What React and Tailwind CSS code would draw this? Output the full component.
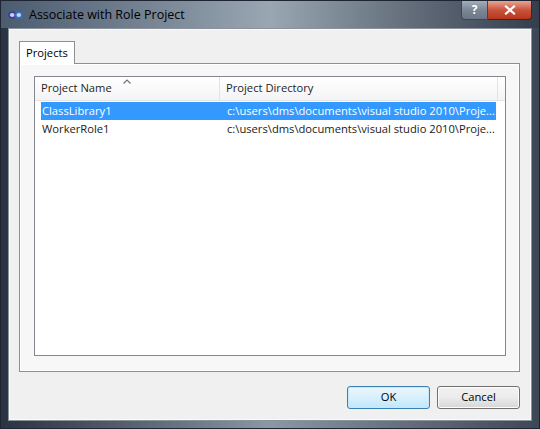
import React from "react";

const ui = { fontFamily: '"Open Sans", "Noto Sans", "DejaVu Sans", sans-serif' };

function TitleIcon() {
  return (
    <svg width="15" height="8" viewBox="0 0 15 8" className="shrink-0">
      <ellipse cx="4.2" cy="4" rx="3.2" ry="2.8" fill="#c9d3ea" stroke="#3d3f9a" strokeWidth="1.8" />
      <ellipse cx="10.8" cy="4" rx="3.2" ry="2.8" fill="#c9d3ea" stroke="#2f6fc8" strokeWidth="1.8" />
    </svg>
  );
}

function CaptionButtons() {
  return (
    <div className="flex h-[19px] self-start">
      <div className="w-[27px] h-full flex items-center justify-center rounded-bl-[4px] border border-t-0 border-[#3c4656] bg-gradient-to-b from-[#a4aeba] via-[#7c8796] to-[#6b7686] text-white text-[12px] font-bold leading-none">
        ?
      </div>
      <div className="w-[44px] h-full flex items-center justify-center rounded-br-[4px] border border-t-0 border-l-0 border-[#5a1a12] bg-gradient-to-b from-[#e8a393] via-[#c8533c] to-[#b7361d]">
        <svg width="12" height="10" viewBox="0 0 12 10">
          <path d="M2 1.5 L10 8.5 M10 1.5 L2 8.5" stroke="#ffffff" strokeWidth="2.2" strokeLinecap="square" />
        </svg>
      </div>
    </div>
  );
}

function Row({ name, dir, selected }) {
  return (
    <div
      className={
        "flex h-[18px] items-center ml-[6px] mr-[9px] text-[11.2px] leading-[18px] " +
        (selected ? "bg-[#3399ff] text-white" : "text-[#1a1a1a]")
      }
    >
      <div className="w-[186px] shrink-0 pl-[1px] whitespace-nowrap">{name}</div>
      <div className="flex-1 min-w-0 whitespace-nowrap">{dir}</div>
    </div>
  );
}

export default function App() {
  return (
    <div
      style={ui}
      className="w-[540px] h-[429px] flex flex-col overflow-hidden bg-gradient-to-r from-[#2a3344] via-[#8d98a6] to-[#3e4756] border border-[#1e2430]"
    >
      {/* caption bar */}
      <div className="h-[27px] shrink-0 flex items-start pr-[7px] bg-gradient-to-r from-[#4c5c70] via-[#9aa6b2] to-[#353e4c]">
        <div className="flex items-center gap-[6px] pl-[7px] pt-[6px]">
          <TitleIcon />
          <span className="text-[12.5px] leading-[16px] text-black">Associate with Role Project</span>
        </div>
        <div className="flex-1" />
        <CaptionButtons />
      </div>

      {/* client area */}
      <div className="flex-1 min-h-0 min-w-0 flex mx-[7px] mb-[7px] bg-[#f0f0f0] border border-[#8a929c]">
        <div className="flex-1 min-w-0 flex flex-col pt-[11px] pl-[9px] pr-[10px] pb-[10px] border border-[#fafafa]">
          {/* tab strip */}
          <div className="flex">
            <div className="h-[23px] px-[6px] flex items-center bg-white border border-b-0 border-[#8e8f8f] text-[11.2px] text-black -mb-px relative z-10">
              Projects
            </div>
          </div>
          {/* tab page */}
          <div className="h-[312px] min-w-0 bg-white border border-[#8e8f8f] p-[1px]">
            <div className="h-full bg-[#f7f7f7] pt-[11px] pl-[13px] pr-[12px] pb-[14px] flex">
              {/* list view */}
              <div className="flex-1 min-w-0 flex flex-col bg-white border border-[#828790] overflow-hidden">
                <div className="h-[24px] shrink-0 flex bg-gradient-to-b from-[#ffffff] to-[#f3f4f6] border-b border-[#e5e5e5] text-[11.2px] text-[#1e1e1e]">
                  <div className="relative w-[185px] shrink-0 flex items-center pl-[6px] border-r border-[#e2e3e5]">
                    Project Name
                    <svg width="8" height="5" viewBox="0 0 8 5" className="absolute left-[88px] top-[2px]">
                      <path d="M0.5 4.5 L4 1 L7.5 4.5" fill="none" stroke="#6d7380" strokeWidth="1.2" />
                    </svg>
                  </div>
                  <div className="w-[278px] shrink-0 flex items-center pl-[6px] border-r border-[#e2e3e5]">
                    Project Directory
                  </div>
                  <div className="flex-1" />
                </div>
                <div className="pt-[1px]">
                  <Row
                    name="ClassLibrary1"
                    dir="c:\users\dms\documents\visual studio 2010\Proje..."
                    selected
                  />
                  <Row
                    name="WorkerRole1"
                    dir="c:\users\dms\documents\visual studio 2010\Proje..."
                  />
                </div>
              </div>
            </div>
          </div>

          {/* dialog buttons */}
          <div className="flex justify-end gap-[7px] mt-[14px]">
            <button className="w-[83px] h-[23px] rounded-[3px] border border-[#3c7fb1] bg-gradient-to-b from-[#eaf6fd] via-[#d9f0fc] to-[#bee6fd] text-[11.2px] text-black shadow-[inset_0_0_0_1px_#c6e9fb]">
              OK
            </button>
            <button className="w-[83px] h-[23px] rounded-[3px] border border-[#707070] bg-gradient-to-b from-[#f2f2f2] via-[#ebebeb] to-[#d6d6d6] text-[11.2px] text-black shadow-[inset_0_0_0_1px_#fcfcfc]">
              Cancel
            </button>
          </div>
        </div>
      </div>
    </div>
  );
}
